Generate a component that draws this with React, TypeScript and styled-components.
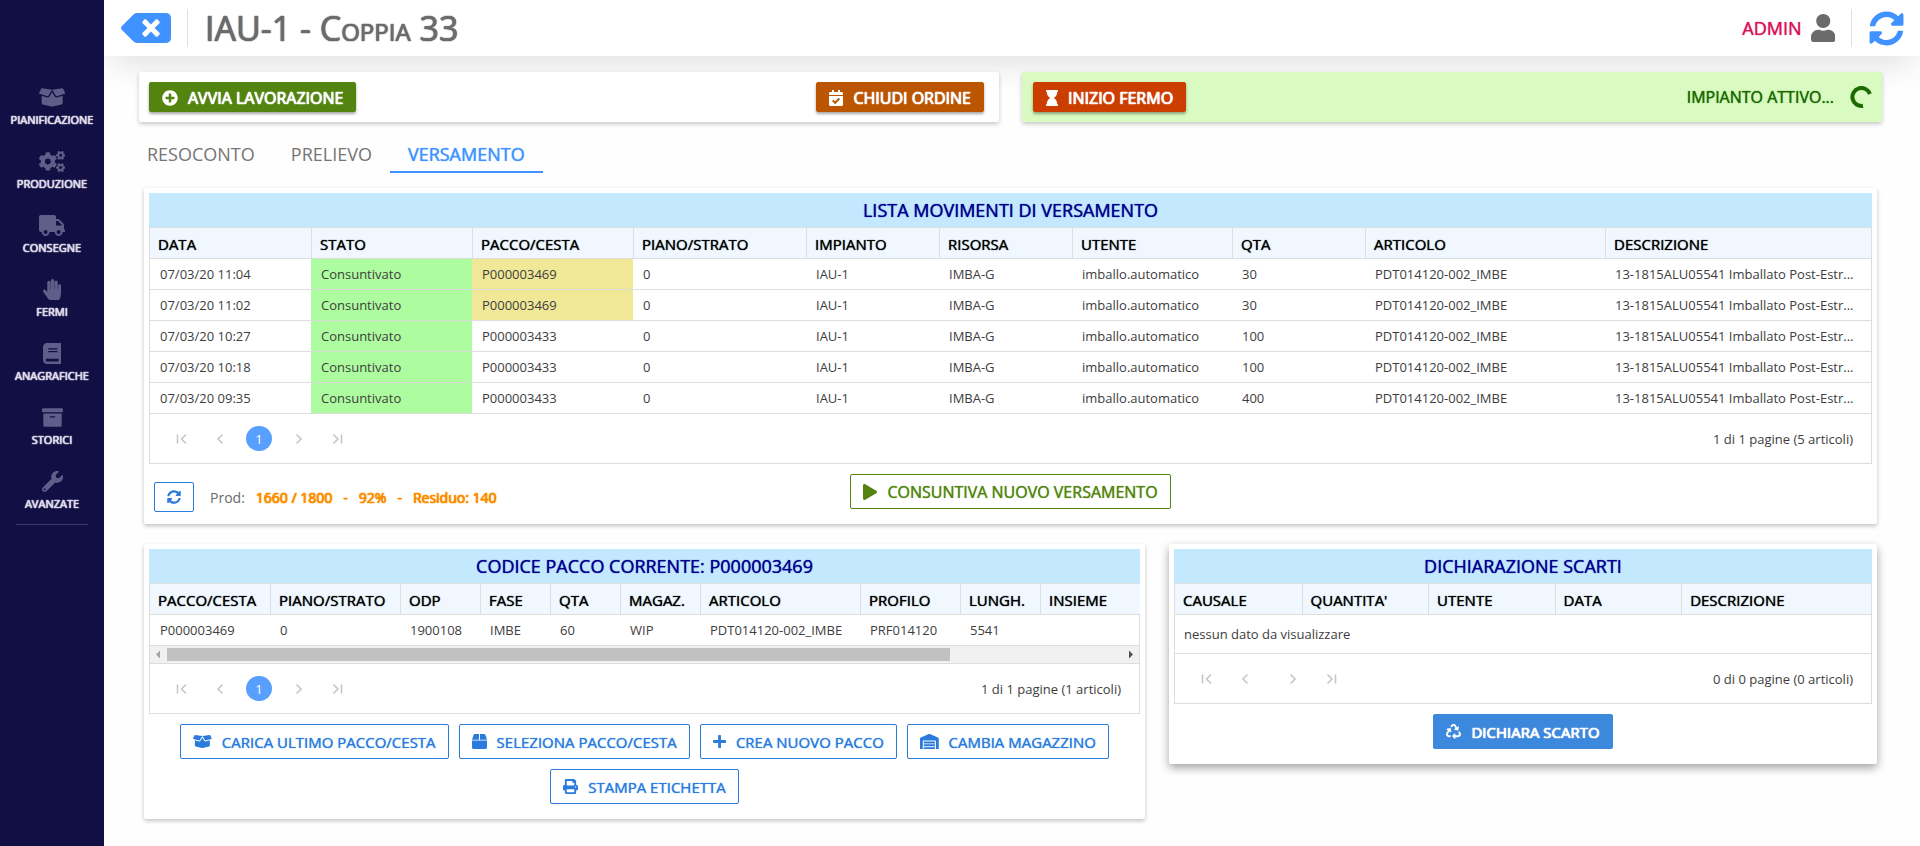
import React from "react";
import styled, { createGlobalStyle, css } from "styled-components";
import type { IconType } from "react-icons";
import {
  FaArchive,
  FaBackspace,
  FaBook,
  FaBox,
  FaBoxOpen,
  FaCalendarCheck,
  FaCogs,
  FaHandPaper,
  FaHourglass,
  FaPlay,
  FaPlus,
  FaPlusCircle,
  FaPrint,
  FaRecycle,
  FaSyncAlt,
  FaTruck,
  FaUser,
  FaWarehouse,
  FaWrench,
} from "react-icons/fa";

/* Icons keep the proportions of their own view box; font-size sets the height. */
const GlobalStyle = createGlobalStyle`
  *, *::before, *::after { box-sizing: border-box; }
  body {
    margin: 0;
    background: #fefefe;
    color: #3d3d3d;
    font-family: "Open Sans", "Noto Sans", sans-serif;
    font-size: 13px;
  }
  button { font-family: inherit; cursor: pointer; }
  svg { flex-shrink: 0; }
  svg[viewBox="0 0 640 512"] { width: 1.25em; }
  svg[viewBox="0 0 448 512"] { width: 0.875em; }
  svg[viewBox="0 0 384 512"] { width: 0.75em; }
`;

const palette = {
  navy: "#110f44",
  accent: "#3f92ff",
  blue: "#2b7bdc",
  green: "#52840f",
  orange: "#bb5500",
  red: "#cc3d00",
  line: "#dddddd",
};

const medium = css`
  text-shadow: 0 0 1px currentColor;
`;

const heavy = css`
  text-shadow: 0 0 1px currentColor, 0 0 1px currentColor, 0 0 1px currentColor;
`;

/* Shell */

const Shell = styled.div`
  display: flex;
  min-height: 100vh;
`;

const Sidebar = styled.nav`
  flex: 0 0 104px;
  padding: 87px 0 0;
  background: ${palette.navy};
`;

const SideList = styled.ul`
  display: flex;
  flex-direction: column;
  gap: 11px;
  margin: 0 16px;
  padding: 0;
  list-style: none;
  border-bottom: 1px solid #37356a;
`;

const SideLink = styled.a`
  display: flex;
  flex-direction: column;
  align-items: center;
  gap: 3px;
  height: 53px;
  margin: 0 -16px;
  color: #dddce8;
  font-size: 11px;
  line-height: 18px;
  text-decoration: none;
  ${heavy}

  svg {
    color: #5f5e89;
    font-size: 21px;
  }
`;

const Page = styled.div`
  flex: 1;
  min-width: 0;
`;

const Header = styled.header`
  display: flex;
  align-items: center;
  height: 56px;
  padding: 0 16px 0 17px;
  background: #fff;
  box-shadow: 0 16px 32px -8px rgba(0, 0, 0, 0.12);
`;

const IconButton = styled.button<{ $size: number }>`
  display: flex;
  padding: 0;
  border: 0;
  background: none;
  color: ${palette.accent};
  font-size: ${(p) => p.$size}px;
`;

const Rule = styled.span`
  width: 1px;
  height: 38px;
  margin: 0 17px 0 16px;
  background: #dfdfe8;
`;

const PageTitle = styled.h1`
  flex: 1;
  margin: 0;
  color: #6b6b6b;
  font-size: 34px;
  font-weight: 400;
  font-variant: small-caps;
  line-height: 48px;
  ${heavy}
`;

const User = styled.a`
  display: flex;
  align-items: center;
  gap: 9px;
  color: #d81159;
  font-size: 18px;
  text-decoration: none;
  ${medium}

  svg {
    color: #6b6b6b;
    font-size: 28px;
  }
`;

const Main = styled.main`
  padding: 16px 38px 27px 25px;
`;

/* Buttons */

const ActionButton = styled.button<{
  $color: string;
  $outline?: boolean;
  $raised?: boolean;
  $large?: boolean;
}>`
  display: inline-flex;
  align-items: center;
  gap: 10px;
  height: ${(p) => (p.$raised ? 30 : 35)}px;
  padding: ${(p) => (p.$large ? 1 : 0)}px 12px 0;
  border: 1px solid ${(p) => p.$color};
  border-radius: 2px;
  background: ${(p) => (p.$outline ? "transparent" : p.$color)};
  color: ${(p) => (p.$outline ? p.$color : "#fff")};
  font-size: ${(p) => (p.$large ? 16 : 15)}px;
  line-height: 22px;
  white-space: nowrap;
  ${(p) => (p.$outline ? medium : heavy)}
  ${(p) => p.$raised && "box-shadow: 0 2px 3px rgba(0, 0, 0, 0.35);"}
`;

const SquareButton = styled.button`
  display: flex;
  align-items: center;
  justify-content: center;
  width: 40px;
  height: 30px;
  padding: 0;
  border: 1px solid ${palette.blue};
  border-radius: 2px;
  background: transparent;
  color: ${palette.blue};
  font-size: 14px;
`;

/* Toolbar */

const Toolbar = styled.div`
  display: grid;
  grid-template-columns: 1fr 1fr;
  gap: 23px;
  margin-left: 10px;
`;

const ToolCard = styled.section<{ $active?: boolean }>`
  display: flex;
  align-items: center;
  justify-content: space-between;
  height: 50px;
  padding: ${(p) => (p.$active ? "0 10px 0 11px" : "0 15px 0 10px")};
  border-radius: 2px;
  background: ${(p) => (p.$active ? "#d9fac0" : "#fff")};
  box-shadow: 0 2px 4px rgba(0, 0, 0, 0.22);
`;

const Status = styled.div`
  display: flex;
  align-items: center;
  gap: 16px;
  color: #1b6600;
  font-size: 16px;
  ${medium}
`;

/* Tabs */

const Tabs = styled.div`
  display: flex;
  height: 51px;
`;

const Tab = styled.button<{ $active?: boolean }>`
  padding: 15px 18px 0;
  border: 0;
  border-bottom: 2px solid ${(p) => (p.$active ? palette.accent : "transparent")};
  background: none;
  color: ${(p) => (p.$active ? palette.accent : "#757575")};
  font-size: 18px;
  line-height: 24px;
  ${(p) => p.$active && medium}
`;

/* Panels */

const Panels = styled.div`
  display: flex;
  flex-direction: column;
  gap: 20px;
  margin: 15px 5px 0 15px;
`;

const PanelRow = styled.div`
  display: grid;
  grid-template-columns: minmax(0, 1001fr) minmax(0, 708fr);
  align-items: start;
  gap: 24px;
`;

const Panel = styled.section<{ $lifted?: boolean }>`
  padding: 5px 5px 0;
  border-radius: 2px;
  background: #fff;
  box-shadow: ${(p) =>
    p.$lifted
      ? "0 4px 10px rgba(0, 0, 0, 0.36)"
      : "0 2px 4px rgba(0, 0, 0, 0.24)"};
`;

const PanelTitle = styled.h2`
  margin: 0;
  background: #c4e9ff;
  color: #00008b;
  font-size: 18px;
  font-weight: 400;
  line-height: 34px;
  text-align: center;
  ${medium}
`;

const GridBox = styled.div`
  border: 1px solid ${palette.line};
`;

const Table = styled.table`
  width: 100%;
  border-spacing: 0;
  table-layout: fixed;
`;

const HeadCell = styled.th`
  height: 31px;
  padding: 1px 8px 0;
  border-bottom: 1px solid ${palette.line};
  background: #f0f7ff;
  color: #000;
  font-size: 15px;
  font-weight: 400;
  line-height: 20px;
  text-align: left;
  white-space: nowrap;
  ${medium}

  & + & {
    border-left: 1px solid ${palette.line};
  }
`;

const tones = { green: "#adfc9f", khaki: "#f0e896" };
type Tone = keyof typeof tones;

const Cell = styled.td<{ $tone?: Tone; $empty?: boolean }>`
  height: ${(p) => (p.$empty ? 39 : 31)}px;
  padding: 0 8px 0 ${(p) => (p.$empty ? 9 : 10)}px;
  overflow: hidden;
  border-bottom: 1px solid ${palette.line};
  background: ${(p) => (p.$tone ? tones[p.$tone] : "transparent")};
  line-height: 18px;
  text-overflow: ellipsis;
  white-space: nowrap;
`;

const Scrollbar = styled.div`
  display: flex;
  align-items: center;
  justify-content: space-between;
  height: 18px;
  border-bottom: 1px solid ${palette.line};
  background: #f1f1f1;
`;

const ScrollTrack = styled.div`
  flex: 1;
  height: 13px;
`;

const ScrollThumb = styled.div`
  width: 82%;
  height: 100%;
  background: #c1c1c1;
`;

const Pager = styled.div`
  display: flex;
  align-items: center;
  justify-content: space-between;
  height: 49px;
  padding: 0 18px 0 12px;
`;

const PagerNav = styled.nav`
  display: flex;
  align-items: center;
`;

const PageNumbers = styled.div`
  display: flex;
  min-width: 8px;
`;

const PagerButton = styled.button<{ $current?: boolean }>`
  display: flex;
  align-items: center;
  justify-content: center;
  width: ${(p) => (p.$current ? 26 : 39)}px;
  height: 25px;
  margin: ${(p) => (p.$current ? "0 7px 0 6px" : "0")};
  padding: 0;
  border: 0;
  border-radius: 13px;
  background: ${(p) => (p.$current ? "#589fff" : "none")};
  color: ${(p) => (p.$current ? "#fff" : "#c4c4c4")};
  font-size: 13px;
`;

const Actions = styled.div`
  display: flex;
  flex-wrap: wrap;
  justify-content: center;
  gap: 10px;
  padding: 10px 20px 15px;
`;

const Footer = styled.div`
  display: grid;
  grid-template-columns: 1fr auto 1fr;
  align-items: start;
  padding: 10px 5px 12px;
`;

const Production = styled.div`
  display: flex;
  align-items: center;
  margin-top: 8px;
  color: #6b6b6b;
  font-size: 14px;
`;

const ProductionLabel = styled.span`
  margin: 0 11px 0 16px;
`;

const Figures = styled.span`
  display: flex;
  gap: 11px;
  color: #fb8c00;
  ${heavy}
`;

/* Drawings */

const Spinner = () => (
  <svg width="22" height="22" viewBox="0 0 22 22" aria-hidden="true">
    <path
      d="M19.9 8A9 9 0 1 0 13 19.8"
      fill="none"
      stroke="#1a6b00"
      strokeWidth="4"
    />
  </svg>
);

const ScrollArrow = ({ left }: { left?: boolean }) => (
  <svg width="17" height="17" viewBox="0 0 17 17" aria-hidden="true">
    <path
      d={left ? "M10 4.500v8L6 8.500z" : "M7 4.500v8L11 8.500z"}
      fill={left ? "#a3a3a3" : "#505050"}
    />
  </svg>
);

const pagerPaths = {
  first: "M2.500 2.500v9M11 2.500L6.500 7L11 11.500",
  prev: "M8.500 2.500L4 7L8.500 11.500",
  next: "M4.500 2.500L9 7L4.500 11.500",
  last: "M2.500 2.500L7 7L2.500 11.500M10.500 2.500v9",
};

const PagerIcon = ({ kind }: { kind: keyof typeof pagerPaths }) => (
  <svg width="13" height="14" viewBox="0 0 13 14" aria-hidden="true">
    <path d={pagerPaths[kind]} fill="none" stroke="currentColor" strokeWidth="1.5" />
  </svg>
);

/* Data */

const menu: { label: string; icon: IconType }[] = [
  { label: "PIANIFICAZIONE", icon: FaBoxOpen },
  { label: "PRODUZIONE", icon: FaCogs },
  { label: "CONSEGNE", icon: FaTruck },
  { label: "FERMI", icon: FaHandPaper },
  { label: "ANAGRAFICHE", icon: FaBook },
  { label: "STORICI", icon: FaArchive },
  { label: "AVANZATE", icon: FaWrench },
];

type Column = [title: string, width: number];

const movementColumns: Column[] = [
  ["DATA", 161],
  ["STATO", 161],
  ["PACCO/CESTA", 161],
  ["PIANO/STRATO", 173],
  ["IMPIANTO", 133],
  ["RISORSA", 133],
  ["UTENTE", 160],
  ["QTA", 133],
  ["ARTICOLO", 240],
  ["DESCRIZIONE", 266],
];

const movement = (time: string, pack: string, qty: string) => [
  `07/03/20 ${time}`,
  "Consuntivato",
  pack,
  "0",
  "IAU-1",
  "IMBA-G",
  "imballo.automatico",
  qty,
  "PDT014120-002_IMBE",
  "13-1815ALU05541 Imballato Post-Estr...",
];

const movements = [
  movement("11:04", "P000003469", "30"),
  movement("11:02", "P000003469", "30"),
  movement("10:27", "P000003433", "100"),
  movement("10:18", "P000003433", "100"),
  movement("09:35", "P000003433", "400"),
];

const packColumns: Column[] = [
  ["PACCO/CESTA", 120],
  ["PIANO/STRATO", 130],
  ["ODP", 80],
  ["FASE", 70],
  ["QTA", 70],
  ["MAGAZ.", 80],
  ["ARTICOLO", 160],
  ["PROFILO", 100],
  ["LUNGH.", 80],
  ["INSIEME", 100],
];

const packs = [
  ["P000003469", "0", "1900108", "IMBE", "60", "WIP", "PDT014120-002_IMBE", "PRF014120", "5541", ""],
];

const scrapColumns: Column[] = [
  ["CAUSALE", 100],
  ["QUANTITA'", 100],
  ["UTENTE", 100],
  ["DATA", 100],
  ["DESCRIZIONE", 150],
];

/* Composite parts */

interface DataGridProps {
  columns: Column[];
  rows: string[][];
  scrollable?: boolean;
  tone?: (value: string) => Tone | undefined;
}

const DataGrid = ({ columns, rows, scrollable, tone }: DataGridProps) => {
  const pages = rows.length ? 1 : 0;
  return (
    <GridBox>
      <Table>
        <colgroup>
          {columns.map(([title, width]) => (
            <col key={title} width={width} />
          ))}
        </colgroup>
        <thead>
          <tr>
            {columns.map(([title]) => (
              <HeadCell key={title} scope="col">
                {title}
              </HeadCell>
            ))}
          </tr>
        </thead>
        <tbody>
          {rows.map((row, r) => (
            <tr key={r}>
              {row.map((value, c) => (
                <Cell key={c} $tone={tone?.(value)}>
                  {value}
                </Cell>
              ))}
            </tr>
          ))}
          {rows.length === 0 && (
            <tr>
              <Cell $empty colSpan={columns.length}>
                nessun dato da visualizzare
              </Cell>
            </tr>
          )}
        </tbody>
      </Table>
      {scrollable && (
        <Scrollbar>
          <ScrollArrow left />
          <ScrollTrack>
            <ScrollThumb />
          </ScrollTrack>
          <ScrollArrow />
        </Scrollbar>
      )}
      <Pager>
        <PagerNav aria-label="Pagine">
          <PagerButton aria-label="Prima pagina">
            <PagerIcon kind="first" />
          </PagerButton>
          <PagerButton aria-label="Pagina precedente">
            <PagerIcon kind="prev" />
          </PagerButton>
          <PageNumbers>
            {pages > 0 && <PagerButton $current>1</PagerButton>}
          </PageNumbers>
          <PagerButton aria-label="Pagina successiva">
            <PagerIcon kind="next" />
          </PagerButton>
          <PagerButton aria-label="Ultima pagina">
            <PagerIcon kind="last" />
          </PagerButton>
        </PagerNav>
        <span>
          {pages} di {pages} pagine ({rows.length} articoli)
        </span>
      </Pager>
    </GridBox>
  );
};

const currentPack = "P000003469";

const movementTone = (value: string): Tone | undefined => {
  if (value === "Consuntivato") return "green";
  if (value === currentPack) return "khaki";
  return undefined;
};

export default function App() {
  return (
    <>
      <GlobalStyle />
      <Shell>
        <Sidebar>
          <SideList>
            {menu.map(({ label, icon: Icon }) => (
              <li key={label}>
                <SideLink href="#">
                  <Icon />
                  {label}
                </SideLink>
              </li>
            ))}
          </SideList>
        </Sidebar>
        <Page>
          <Header>
            <IconButton $size={40} aria-label="Indietro">
              <FaBackspace />
            </IconButton>
            <Rule />
            <PageTitle>IAU-1 - Coppia 33</PageTitle>
            <User href="#">
              ADMIN
              <FaUser />
            </User>
            <Rule />
            <IconButton $size={35} aria-label="Aggiorna">
              <FaSyncAlt />
            </IconButton>
          </Header>
          <Main>
            <Toolbar>
              <ToolCard>
                <ActionButton $color={palette.green} $raised $large>
                  <FaPlusCircle />
                  AVVIA LAVORAZIONE
                </ActionButton>
                <ActionButton $color={palette.orange} $raised $large>
                  <FaCalendarCheck />
                  CHIUDI ORDINE
                </ActionButton>
              </ToolCard>
              <ToolCard $active>
                <ActionButton $color={palette.red} $raised $large>
                  <FaHourglass />
                  INIZIO FERMO
                </ActionButton>
                <Status role="status">
                  IMPIANTO ATTIVO...
                  <Spinner />
                </Status>
              </ToolCard>
            </Toolbar>
            <Tabs role="tablist">
              <Tab role="tab">RESOCONTO</Tab>
              <Tab role="tab">PRELIEVO</Tab>
              <Tab role="tab" aria-selected $active>
                VERSAMENTO
              </Tab>
            </Tabs>
            <Panels>
              <Panel>
                <PanelTitle>LISTA MOVIMENTI DI VERSAMENTO</PanelTitle>
                <DataGrid columns={movementColumns} rows={movements} tone={movementTone} />
                <Footer>
                  <Production>
                    <SquareButton aria-label="Aggiorna produzione">
                      <FaSyncAlt />
                    </SquareButton>
                    <ProductionLabel>Prod:</ProductionLabel>
                    <Figures>
                      <span>1660 / 1800</span>
                      <span>-</span>
                      <span>92%</span>
                      <span>-</span>
                      <span>Residuo: 140</span>
                    </Figures>
                  </Production>
                  <ActionButton $color={palette.green} $outline $large>
                    <FaPlay />
                    CONSUNTIVA NUOVO VERSAMENTO
                  </ActionButton>
                </Footer>
              </Panel>
              <PanelRow>
                <Panel>
                  <PanelTitle>CODICE PACCO CORRENTE: {currentPack}</PanelTitle>
                  <DataGrid columns={packColumns} rows={packs} scrollable />
                  <Actions>
                    <ActionButton $color={palette.blue} $outline>
                      <FaBoxOpen />
                      CARICA ULTIMO PACCO/CESTA
                    </ActionButton>
                    <ActionButton $color={palette.blue} $outline>
                      <FaBox />
                      SELEZIONA PACCO/CESTA
                    </ActionButton>
                    <ActionButton $color={palette.blue} $outline>
                      <FaPlus />
                      CREA NUOVO PACCO
                    </ActionButton>
                    <ActionButton $color={palette.blue} $outline>
                      <FaWarehouse />
                      CAMBIA MAGAZZINO
                    </ActionButton>
                    <ActionButton $color={palette.blue} $outline>
                      <FaPrint />
                      STAMPA ETICHETTA
                    </ActionButton>
                  </Actions>
                </Panel>
                <Panel $lifted>
                  <PanelTitle>DICHIARAZIONE SCARTI</PanelTitle>
                  <DataGrid columns={scrapColumns} rows={[]} />
                  <Actions>
                    <ActionButton $color="#3b88dd">
                      <FaRecycle />
                      DICHIARA SCARTO
                    </ActionButton>
                  </Actions>
                </Panel>
              </PanelRow>
            </Panels>
          </Main>
        </Page>
      </Shell>
    </>
  );
}
